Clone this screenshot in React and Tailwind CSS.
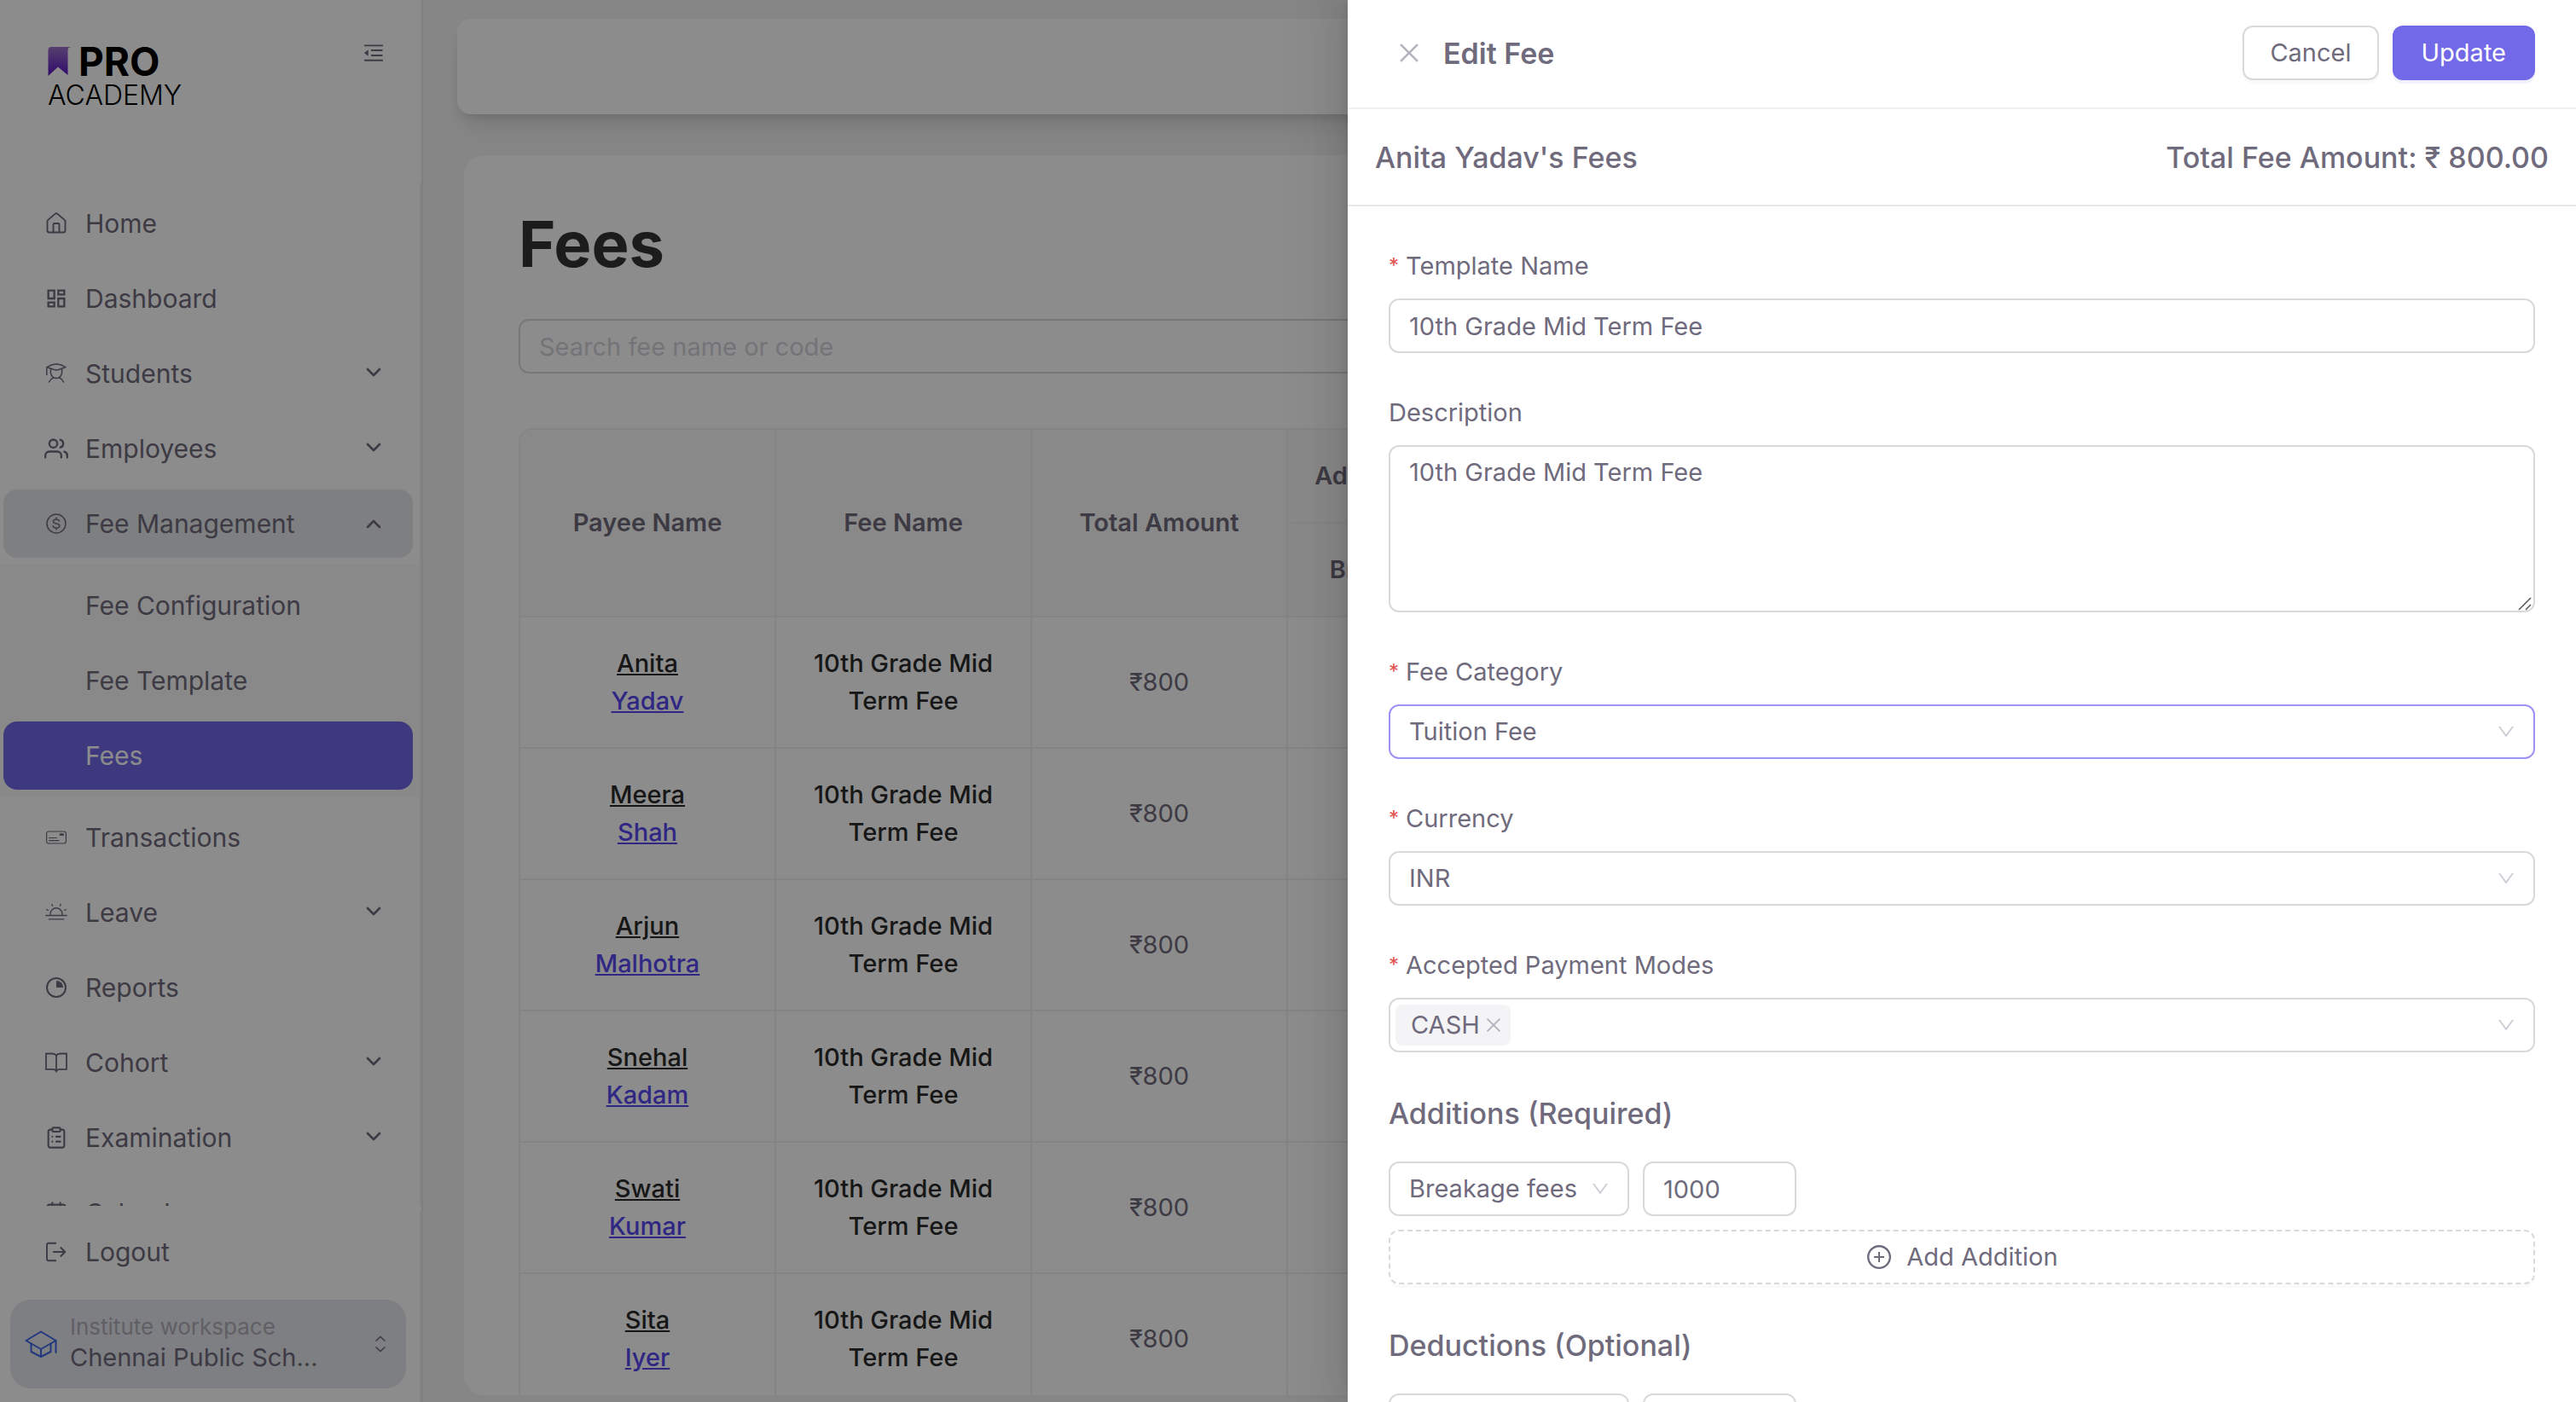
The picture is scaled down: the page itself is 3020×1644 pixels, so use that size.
import React, { useState } from 'react';
import { House, ClipboardList, Calendar } from 'lucide-react';
import { FiUsers } from 'react-icons/fi';
import { MdOutlineDashboard } from 'react-icons/md';
import { PiSunHorizonLight } from 'react-icons/pi';
import { AiOutlineMenuFold, AiOutlineClose, AiOutlineDown, AiOutlinePlusCircle } from 'react-icons/ai';

const StudentIcon = () => (
  <svg className="h-7 w-7" viewBox="0 0 28 28" fill="none" stroke="currentColor" strokeWidth="1.5" strokeLinecap="round" strokeLinejoin="round">
    <path d="M3 6.5C6 4.5 10 3.2 14 2.8c4 .4 8 1.7 11 3.7-3 1-7 3-11 3.5C10 9.5 6 7.5 3 6.5z" />
    <path d="M2.8 6.8v8.7" />
    <path d="M7.5 8.8C6.6 14 8.5 19.5 14 19.5s7.4-5.5 6.5-10.7" />
    <path d="M10.5 19c-2 .8-4 2.5-5 5M17.5 19c2 .8 4 2.5 5 5" />
  </svg>
);

const DollarIcon = () => (
  <svg className="h-7 w-7" viewBox="0 0 28 28" fill="none" stroke="currentColor" strokeWidth="1.5" strokeLinecap="round">
    <circle cx="14" cy="14" r="11" />
    <path d="M17.5 11c-.4-1.4-1.8-2.1-3.5-2.1-2 0-3.6.9-3.6 2.6 0 3.5 7.4 1.5 7.4 5.1 0 1.8-1.7 2.6-3.7 2.6s-3.5-.9-3.9-2.4M14 7v1.8M14 19.3V21" />
  </svg>
);

const CardIcon = () => (
  <svg className="h-7 w-7" viewBox="0 0 28 28" fill="none" stroke="currentColor" strokeWidth="1.2" strokeLinecap="round">
    <rect x="2.6" y="7" width="22.8" height="14" rx="2.5" />
    <path d="M5.5 14.5h9M5.5 17.7h11.5" />
    <rect x="18.5" y="10" width="3.6" height="1.2" strokeWidth="1.4" fill="currentColor" />
  </svg>
);

const ReportIcon = () => (
  <svg className="h-7 w-7" viewBox="0 0 28 28" fill="none" stroke="currentColor" strokeWidth="2">
    <circle cx="14" cy="14" r="11" />
    <path d="M14 6a8 8 0 0 1 8 8h-8z" fill="currentColor" stroke="none" />
  </svg>
);

const BookIcon = () => (
  <svg className="h-7 w-7" viewBox="0 0 28 28" fill="none" stroke="currentColor" strokeWidth="1.8">
    <path d="M14 5.8C13 4.3 11.5 3.5 9.5 3.5H2v18.3h8c2 0 3.3.7 4 2.2.7-1.5 2-2.2 4-2.2h8V3.5h-7.5c-2 0-3.5.8-4.5 2.3zM14 5.5V24" />
  </svg>
);

const LogoutIcon = () => (
  <svg className="h-7 w-7" viewBox="0 0 28 28" fill="none" stroke="currentColor" strokeWidth="1.9" strokeLinejoin="round">
    <path d="M14 3.8H5A2 2 0 0 0 3 5.8v16.4a2 2 0 0 0 2 2h9M10 14h14M18.8 8.5l5.5 5.5-5.5 5.5" />
  </svg>
);

const InstituteIcon = () => (
  <svg className="h-8 w-10 shrink-0" viewBox="0 0 40 32" fill="none" stroke="#3f66e6" strokeWidth="2" strokeLinejoin="round" strokeLinecap="round">
    <path d="M20 1.5L37.5 12 20 22 2.5 12z" />
    <path d="M8.5 15.5v9.5L20 31l11.5-6v-9.5M20 22v9M37.5 12v14" />
  </svg>
);

const NavChevron = ({ open }) => (
  <svg className="h-7 w-7" viewBox="0 0 28 28" fill="none" stroke="currentColor" strokeWidth="2.6" strokeLinecap="round" strokeLinejoin="round">
    <path d={open ? 'M7 18l7-7 7 7' : 'M7 9l7 7 7-7'} />
  </svg>
);

const NAV_ITEMS = [
  { label: 'Home', icon: <House className="h-7 w-7" strokeWidth={1.6} /> },
  { label: 'Dashboard', icon: <MdOutlineDashboard className="h-7 w-7" /> },
  { label: 'Students', icon: <StudentIcon />, expandable: true },
  { label: 'Employees', icon: <FiUsers className="h-7 w-7" />, expandable: true },
  {
    label: 'Fee Management',
    icon: <DollarIcon />,
    expandable: true,
    children: ['Fee Configuration', 'Fee Template', 'Fees']
  },
  { label: 'Transactions', icon: <CardIcon /> },
  { label: 'Leave', icon: <PiSunHorizonLight className="h-7 w-7" />, expandable: true },
  { label: 'Reports', icon: <ReportIcon /> },
  { label: 'Cohort', icon: <BookIcon />, expandable: true },
  { label: 'Examination', icon: <ClipboardList className="h-7 w-7" strokeWidth={1.8} />, expandable: true },
  { label: 'Calendar', icon: <Calendar className="h-7 w-7" strokeWidth={1.8} /> }
];

const PAYEES = [
  ['Anita', 'Yadav'],
  ['Meera', 'Shah'],
  ['Arjun', 'Malhotra'],
  ['Snehal', 'Kadam'],
  ['Swati', 'Kumar'],
  ['Sita', 'Iyer']
];

const Logo = () => (
  <div className="flex flex-col text-black">
    <div className="flex items-center gap-2">
      <svg className="h-[34px] w-7" viewBox="0 0 28 34">
        <defs>
          <linearGradient id="ribbon" x1="0" y1="0" x2="0" y2="1">
            <stop offset="0" stopColor="#9b74c9" />
            <stop offset="1" stopColor="#5a12c4" />
          </linearGradient>
        </defs>
        <path d="M4 0h24c-3 0-4.5 1.5-4.5 4v29L12 23.5.5 34V4C.5 1.5 1.5 0 4 0z" fill="url(#ribbon)" />
      </svg>
      <span className="text-[46px] font-bold leading-10">PRO</span>
    </div>
    <span className="text-[32px] font-light leading-10">ACADEMY</span>
  </div>
);

const NavItem = ({ item }) => {
  const open = Boolean(item.children);
  return (
    <li>
      <button
        type="button"
        className={`flex h-20 w-full items-center gap-5 rounded-2xl pl-12 pr-8 text-left ${open ? 'bg-[#e5e7eb]' : ''}`}
      >
        {item.icon}
        <span className="flex-1">{item.label}</span>
        {item.expandable && <NavChevron open={open} />}
      </button>
      {open && (
        <ul className="-ml-1 -mr-2 mt-2 flex flex-col gap-2 bg-[#fafafa] py-2 pl-1 pr-2">
          {item.children.map((child) => (
            <li key={child}>
              <a
                href="#fees"
                className={`flex h-20 items-center rounded-2xl pl-24 ${child === 'Fees' ? 'bg-[#7269e8] text-white' : ''}`}
              >
                {child}
              </a>
            </li>
          ))}
        </ul>
      )}
    </li>
  );
};

const Sidebar = () => (
  <aside className="flex h-full w-[496px] shrink-0 flex-col border-r-2 border-[#e5e7eb] bg-white text-[30px]">
    <div className="flex h-[214px] shrink-0 items-start justify-between pl-14 pr-10 pt-12">
      <div className="pt-1">
        <Logo />
      </div>
      <button type="button" aria-label="Collapse menu">
        <AiOutlineMenuFold className="h-7 w-8" />
      </button>
    </div>
    <nav className="h-[1200px] overflow-hidden border-r-2 border-[#f0f0f0]">
      <ul className="flex flex-col gap-2 py-2 pl-1 pr-2">
        {NAV_ITEMS.map((item) => (
          <NavItem key={item.label} item={item} />
        ))}
      </ul>
    </nav>
    <div className="mt-[6px] flex flex-1 flex-col border-r-2 border-[#f0f0f0]">
      <button type="button" className="ml-1 mt-2 flex h-20 shrink-0 items-center gap-5 pl-12 text-left">
        <LogoutIcon />
        <span>Logout</span>
      </button>
      <button
        type="button"
        className="ml-3 mr-4 mt-4 flex h-[104px] shrink-0 items-center gap-[14px] rounded-3xl bg-[#e5e7ee] px-4 text-left"
      >
        <InstituteIcon />
        <span className="flex flex-1 flex-col pb-1">
          <span className="text-[26px] leading-9 text-[#b0aeb9]">Institute workspace</span>
          <span className="text-[29px] leading-9">Chennai Public Sch...</span>
        </span>
        <svg className="h-7 w-7" viewBox="0 0 28 28" fill="none" stroke="currentColor" strokeWidth="1.6">
          <path d="M8.5 10.5L14 5.5l5.5 5M8.5 17.5l5.5 5 5.5-5" />
        </svg>
      </button>
    </div>
  </aside>
);

const HEAD = 'border-b-2 border-r-2 border-[#f0f0f0] bg-[#fafafa] px-6 text-center font-semibold';
const CELL = 'border-b-2 border-r-2 border-[#f0f0f0] px-8 py-8 text-center';

const FeesTable = () => (
  <div className="overflow-hidden rounded-tl-2xl border-l-2 border-t-2 border-[#f0f0f0]">
    <table className="w-[2100px] table-fixed border-separate border-spacing-0 leading-[44px]">
      <colgroup>
        <col className="w-[300px]" />
        <col className="w-[300px]" />
        <col className="w-[300px]" />
        <col className="w-[300px]" />
        <col />
      </colgroup>
      <thead>
        <tr className="h-[110px]">
          <th rowSpan={2} className={HEAD}>Payee Name</th>
          <th rowSpan={2} className={HEAD}>Fee Name</th>
          <th rowSpan={2} className={HEAD}>Total Amount</th>
          <th className={HEAD}>Addition Amount</th>
          <th rowSpan={2} className={HEAD}>Actions</th>
        </tr>
        <tr className="h-[110px]">
          <th className={HEAD}>Breakage fees</th>
        </tr>
      </thead>
      <tbody>
        {PAYEES.map(([first, last]) => (
          <tr key={first}>
            <td className={CELL}>
              <a href="#payee" className="font-medium">
                <span className="block text-[#2b2b2b] underline">{first}</span>
                <span className="block text-[#5848f0] underline">{last}</span>
              </a>
            </td>
            <td className={`${CELL} font-medium text-[#2b2b2b]`}>10th Grade Mid Term Fee</td>
            <td className={CELL}>₹800</td>
            <td className={CELL} />
            <td className={CELL} />
          </tr>
        ))}
      </tbody>
    </table>
  </div>
);

const FIELD = 'w-full rounded-xl border-2 bg-white px-[22px] outline-none';

const Label = ({ htmlFor, required, children }) => (
  <label htmlFor={htmlFor} className="mb-4 flex h-11 items-center gap-2">
    {required && <span className="text-[24px] text-[#e0524f]">*</span>}
    {children}
  </label>
);

const SelectField = ({ id, value, active, label, className = 'w-full' }) => (
  <div className={`relative ${className}`}>
    <select
      id={id}
      aria-label={label}
      defaultValue={value}
      className={`${FIELD} h-16 appearance-none ${active ? 'border-[#9d92f5]' : 'border-[#d9d9d9]'}`}
    >
      <option>{value}</option>
    </select>
    <AiOutlineDown className="pointer-events-none absolute right-[22px] top-5 h-6 w-6 text-[#cfced6]" />
  </div>
);

const AmountRow = ({ label, name, value }) => {
  const [amount, setAmount] = useState(value);
  return (
    <div className="flex gap-4">
      <SelectField value={name} label={label} className="w-[282px]" />
      <div className="w-[180px]">
        <input
          aria-label={`${label} amount`}
          value={amount}
          onChange={(e) => setAmount(e.target.value)}
          className={`${FIELD} h-16 border-[#d9d9d9]`}
        />
      </div>
    </div>
  );
};

const EditFeeDrawer = () => (
  <section
    role="dialog"
    aria-label="Edit Fee"
    className="absolute inset-y-0 right-0 flex w-[1440px] max-w-full flex-col overflow-hidden bg-white shadow-[-12px_0_32px_0_rgba(0,0,0,0.08),-6px_0_12px_-8px_rgba(0,0,0,0.12),-18px_0_56px_16px_rgba(0,0,0,0.05)]"
  >
    <header className="flex h-32 shrink-0 items-center border-b-2 border-[#f0f0f0] px-12 pb-[2px]">
      <button type="button" aria-label="Close" className="ml-2 mr-6 text-[#b4b2bd]">
        <AiOutlineClose className="h-8 w-8" />
      </button>
      <h2 className="flex-1 text-[34px] font-semibold">Edit Fee</h2>
      <div className="flex gap-4">
        <button type="button" className="h-16 rounded-xl border-2 border-[#d9d9d9] px-[30px] shadow-[0_4px_0_rgba(0,0,0,0.02)]">
          Cancel
        </button>
        <button type="button" className="h-16 rounded-xl bg-[#7269e8] px-[34px] text-white shadow-[0_4px_0_rgba(114,105,232,0.1)]">
          Update
        </button>
      </div>
    </header>
    <div className="flex h-[114px] shrink-0 items-center justify-between border-b-2 border-[#e5e7eb] px-8 text-[34px] font-medium">
      <span>Anita Yadav's Fees</span>
      <span>Total Fee Amount: ₹ 800.00</span>
    </div>
    <form className="flex flex-col gap-12 p-12">
      <div>
        <Label htmlFor="template" required>Template Name</Label>
        <input id="template" defaultValue="10th Grade Mid Term Fee" className={`${FIELD} h-16 border-[#d9d9d9]`} />
      </div>
      <div>
        <Label htmlFor="description">Description</Label>
        <div className="relative">
          <textarea
            id="description"
            defaultValue="10th Grade Mid Term Fee"
            className={`${FIELD} block h-[196px] resize-none border-[#d9d9d9] py-2 leading-[44px]`}
          />
          <svg className="pointer-events-none absolute bottom-[2px] right-1 h-4 w-4" viewBox="0 0 16 16" stroke="#555" strokeWidth="1.5">
            <path d="M1 15L15 1M9 15l6-6" />
          </svg>
        </div>
      </div>
      <div>
        <Label htmlFor="category" required>Fee Category</Label>
        <SelectField id="category" value="Tuition Fee" active />
      </div>
      <div>
        <Label htmlFor="currency" required>Currency</Label>
        <SelectField id="currency" value="INR" />
      </div>
      <div>
        <Label htmlFor="modes" required>Accepted Payment Modes</Label>
        <div className="flex h-16 items-center gap-2 rounded-xl border-2 border-[#d9d9d9] pl-[6px] pr-5">
          <span className="flex h-12 items-center gap-1 rounded-lg bg-[#f4f4f6] pl-[18px] pr-2">
            CASH
            <button type="button" aria-label="Remove CASH" className="text-[#b4b2bd]">
              <AiOutlineClose className="h-6 w-6" />
            </button>
          </span>
          <input id="modes" className="min-w-0 flex-1 outline-none" />
          <AiOutlineDown className="h-6 w-6 text-[#cfced6]" />
        </div>
      </div>
      <div>
        <h3 className="mb-8 text-[34px] font-medium leading-[48px]">Additions (Required)</h3>
        <AmountRow label="Addition" name="Breakage fees" value="1000" />
        <button
          type="button"
          className="mt-4 flex h-16 w-full items-center justify-center gap-4 rounded-xl border-2 border-dashed border-[#d9d9d9] shadow-[0_4px_0_rgba(0,0,0,0.02)]"
        >
          <AiOutlinePlusCircle className="h-8 w-8" />
          Add Addition
        </button>
      </div>
      <div>
        <h3 className="mb-8 text-[34px] font-medium leading-[48px]">Deductions (Optional)</h3>
        <AmountRow label="Deduction" name="" value="" />
      </div>
    </form>
  </section>
);

export default function App() {
  return (
    <div className="relative flex h-screen overflow-hidden bg-[#f5f5f5] font-['Inter',sans-serif] text-[29px] text-[#6f6b7d]">
      <Sidebar />
      <div className="flex min-w-0 flex-1 flex-col">
        <div className="ml-10 mr-10 mt-[22px] h-28 shrink-0 rounded-2xl bg-white shadow-[0_20px_30px_-6px_rgba(0,0,0,0.1),0_8px_12px_-4px_rgba(0,0,0,0.1)]" />
        <main className="mb-2 ml-12 mr-12 mt-12 min-h-0 flex-1 overflow-hidden rounded-3xl bg-white px-16 pt-[60px]">
          <h1 className="text-[74px] font-bold leading-[88px] text-[#333]">Fees</h1>
          <input
            aria-label="Search fees"
            placeholder="Search fee name or code"
            className="mb-16 mt-11 h-16 w-full rounded-xl border-2 border-[#d9d9d9] px-[22px] outline-none placeholder:text-[#d3d4da]"
          />
          <FeesTable />
        </main>
      </div>
      <div className="absolute inset-0 bg-black/45" />
      <EditFeeDrawer />
    </div>
  );
}
